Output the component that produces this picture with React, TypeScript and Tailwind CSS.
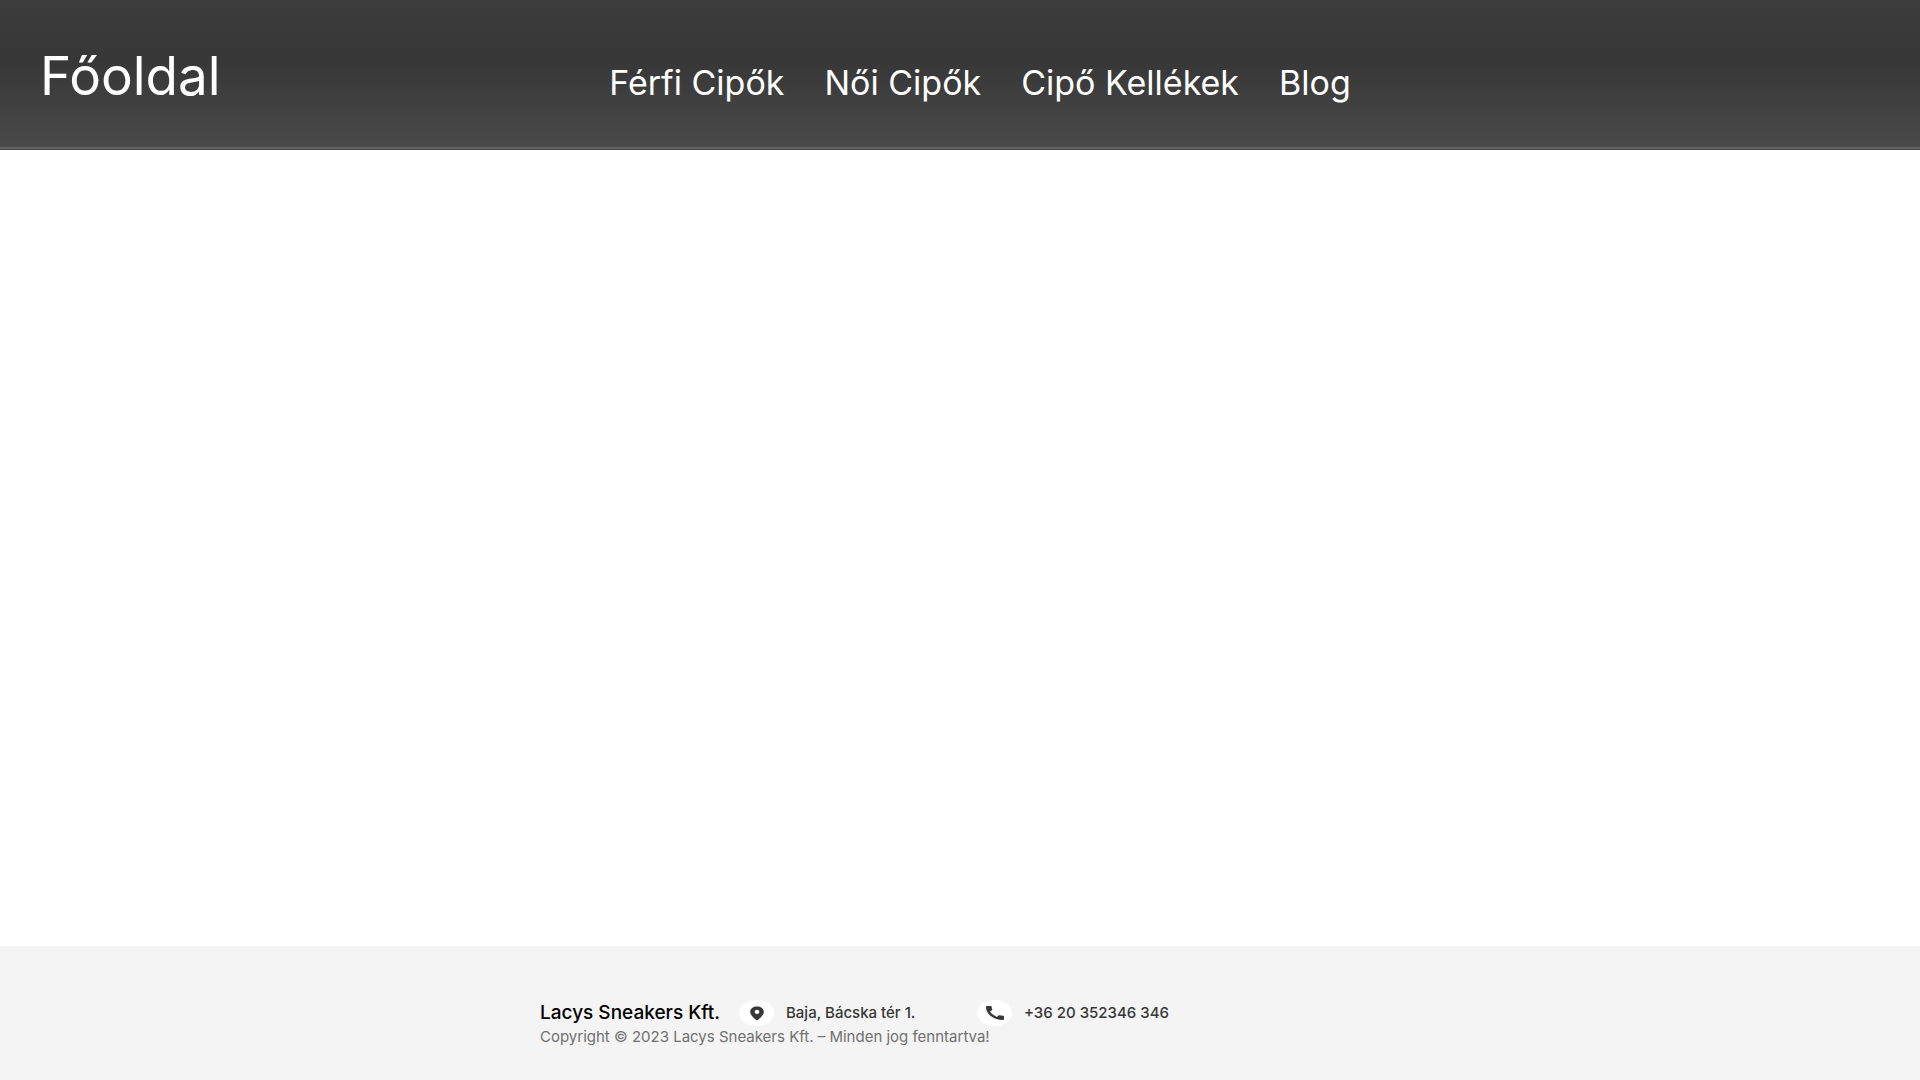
const navItems = [
  { label: "Férfi Cipők", width: "min-w-[174px]" },
  { label: "Női Cipők", width: "min-w-[156px]" },
  { label: "Cipő Kellékek", width: "min-w-[215px]" },
  { label: "Blog", width: "min-w-[67px]" },
];

function PinIcon() {
  return (
    <span className="flex h-[26px] w-[35px] shrink-0 items-center justify-center rounded-[50%] bg-white">
      <svg width="14" height="15" viewBox="0 0 14 16" preserveAspectRatio="none" fill="#373737" aria-hidden="true">
        <path
          fillRule="evenodd"
          d="M7 .5C3.3.5.2 2.7.2 6.2c0 3.700 3.500 6.500 6.800 9.300 3.300-2.800 6.800-5.600 6.800-9.300C13.800 2.700 10.700.5 7 .5Zm0 3.600a2.400 2.200 0 1 1 0 4.400 2.400 2.200 0 0 1 0-4.400Z"
        />
      </svg>
    </span>
  );
}

function PhoneIcon() {
  return (
    <span className="flex h-[26px] w-[35px] shrink-0 items-center justify-center rounded-[50%] bg-white">
      <svg width="18" height="14" viewBox="3 3 18 18" preserveAspectRatio="none" fill="#373737" aria-hidden="true">
        <path d="M20.010 15.380c-1.230 0-2.420-.2-3.530-.56a.977.977 0 0 0-1.010.24l-1.570 1.970c-2.830-1.350-5.480-3.900-6.890-6.830l1.950-1.660c.27-.28.35-.67.24-1.020-.37-1.110-.56-2.300-.56-3.530 0-.54-.45-.99-.99-.99H4.190C3.650 3 3 3.240 3 3.990 3 13.280 10.730 21 20.010 21c.71 0 .99-.63.99-1.180v-3.450c0-.54-.45-.99-.99-.99Z" />
      </svg>
    </span>
  );
}

export default function App() {
  return (
    <div className="flex min-h-screen flex-col bg-white font-['Inter',sans-serif]">
      <header className="grid h-[150px] grid-cols-[1fr_auto_1fr] items-baseline border-b border-[#4a4a4a] bg-linear-to-b from-[#3c3c3c] via-[#373737] via-40% to-[#4a4a4a] pt-10 pl-10 text-white shadow-[inset_0_-2px_0_#646262]">
        <a href="#" className="text-[53px] leading-[72px]">
          Főoldal
        </a>
        <nav className="flex gap-10 text-[34px] leading-[48px]">
          {navItems.map((item) => (
            <a key={item.label} href="#" className={`whitespace-nowrap ${item.width}`}>
              {item.label}
            </a>
          ))}
        </nav>
      </header>
      <main className="flex-1" />
      <footer className="flex h-[134px] flex-col items-center bg-[#f4f4f4] pt-[54px]">
        <div className="w-full max-w-[840px] text-[15px]">
          <address className="flex items-center whitespace-nowrap not-italic text-[#373737]">
            <strong className="w-[199px] text-[19px] leading-6 font-medium text-black">Lacys Sneakers Kft.</strong>
            <PinIcon />
            <span className="ml-3 w-[191px] font-medium">Baja, Bácska tér 1.</span>
            <PhoneIcon />
            <a href="tel:+3620352346346" className="ml-3 font-medium">
              +36 20 352346 346
            </a>
          </address>
          <p className="leading-[22px] text-[#707070]">Copyright © 2023 Lacys Sneakers Kft. – Minden jog fenntartva!</p>
        </div>
      </footer>
    </div>
  );
}
